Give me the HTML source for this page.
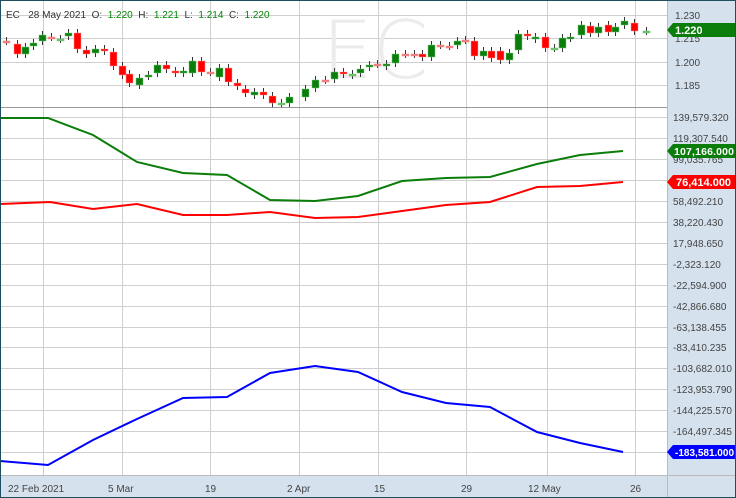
<!DOCTYPE html>
<html><head><style>
html,body{margin:0;padding:0;background:#fff}
#c{position:relative;width:736px;height:498px;overflow:hidden;font-family:"Liberation Sans",sans-serif}
</style></head><body><div id="c">
<svg id="s" width="736" height="498" xmlns="http://www.w3.org/2000/svg" style="position:absolute;left:0;top:0">
<rect x="667" y="0" width="69" height="498" fill="#d6e1ee"/>
<rect x="0" y="476" width="736" height="22" fill="#d6e1ee"/>
<g id="grid" stroke="#cfcfcf" stroke-width="1"></g>
<line x1="0" y1="107.5" x2="667" y2="107.5" stroke="#999"/>
<line x1="0" y1="475.5" x2="736" y2="475.5" stroke="#bbb"/>
<line x1="667.5" y1="0" x2="667.5" y2="498" stroke="#bbb"/>
<text x="322" y="78" font-size="80" fill="#ececec" font-family="DejaVu Sans" style="font-weight:200">EC</text>
<g id="cand"></g>
<polyline fill="none" stroke="#0a7d0a" stroke-width="2" points="0,118 48,118 93,135 137,162 183,173 227,175 270,200 315,201 358,196 402,181 446,178 490,177 537,164 580,155 623,151"/>
<polyline fill="none" stroke="#f00" stroke-width="2" points="0,204 50,202 93,209 137,204 183,215 227,215 270,212 315,218 358,217 402,211 446,205 490,202 537,187 580,186 623,182"/>
<polyline fill="none" stroke="#00f" stroke-width="2" points="0,461 48,465 93,440 137,419 183,398 227,397 270,373 315,366 358,372 402,392 446,403 490,407 537,432 580,443 623,452"/>
<g font-size="10" fill="#444" id="lab"></g>
<text x="6" y="18" font-size="10" fill="#333" xml:space="preserve">EC   28 May 2021  O:  <tspan fill="#080">1.220</tspan>  H:  <tspan fill="#080">1.221</tspan>  L:  <tspan fill="#080">1.214</tspan>  C:  <tspan fill="#080">1.220</tspan></text>
<polygon points="667,30 673,23 736,23 736,37 673,37" fill="#0a7d0a"/>
<text x="675" y="34" font-size="11" font-weight="bold" fill="#fff">1.220</text>
<polygon points="667,151 673,144 736,144 736,158 673,158" fill="#0a7d0a"/>
<text x="674" y="155" font-size="10.5" font-weight="bold" fill="#fff" textLength="60">107,166.000</text>
<polygon points="667,182 673,175 736,175 736,189 673,189" fill="#f00"/>
<text x="676" y="186" font-size="11" font-weight="bold" fill="#fff">76,414.000</text>
<polygon points="667,452 673,445 736,445 736,459 673,459" fill="#00f"/>
<text x="675" y="456" font-size="10" font-weight="bold" fill="#fff" textLength="59">-183,581.000</text>
<rect x="0.5" y="0.5" width="735" height="497" fill="none" stroke="#1d4f5f"/>
</svg>
<script>
var ns="http://www.w3.org/2000/svg";
function el(p,t,a){var e=document.createElementNS(ns,t);for(var k in a)e.setAttribute(k,a[k]);p.appendChild(e);return e;}
var g=document.getElementById('grid'),lab=document.getElementById('lab');
[43,122,210,299,378,466,547,635].forEach(function(x){el(g,'line',{x1:x+.5,y1:0,x2:x+.5,y2:476});});
[[15,'1.230'],[38,'1.215'],[62,'1.200'],[85,'1.185']].forEach(function(a){el(g,'line',{x1:0,y1:a[0]+.5,x2:667,y2:a[0]+.5});var t=el(lab,'text',{x:675,y:a[0]+4});t.textContent=a[1];});
var L=['139,579.320','119,307.540','99,035.765','78,764.000','58,492.210','38,220.430','17,948.650','-2,323.120','-22,594.900','-42,866.680','-63,138.455','-83,410.235','-103,682.010','-123,953.790','-144,225.570','-164,497.345','-183,581.000'];
L.forEach(function(s,i){var y=Math.round(117+i*20.95);el(g,'line',{x1:0,y1:y+.5,x2:667,y2:y+.5});if(i==3||i==16)return;var t=el(lab,'text',{x:673,y:y+4});t.textContent=s;});
[[8,'22 Feb 2021'],[108,'5 Mar'],[205,'19'],[287,'2 Apr'],[374,'15'],[461,'29'],[528,'12 May'],[630,'26']].forEach(function(a){var t=el(lab,'text',{x:a[0],y:492});t.textContent=a[1];});
var C=[[6,'p',41,41],[17,'r',44,54],[25,'g',47,54],[33,'g',43,46],[42,'g',35,41],[51,'p',37,37],[60,'q',39,39],[68,'g',33,36],[77,'r',33,49],[86,'r',50,54],[95,'g',49,53],[104,'r',49,51],[113,'r',52,66],[122,'r',66,75],[129,'r',74,83],[139,'g',78,85],[148,'g',75,76],[157,'g',65,73],[166,'r',65,69],[175,'r',71,73],[183,'g',71,73],[192,'g',61,73],[201,'r',61,72],[210,'p',72,72],[219,'g',68,77],[228,'r',68,82],[237,'r',83,86],[245,'r',89,93],[254,'g',92,95],[263,'r',92,95],[272,'r',96,103],[281,'q',103,103],[289,'g',97,103],[305,'g',89,97],[315,'g',80,88],[325,'p',80,80],[334,'g',72,79],[343,'r',72,74],[352,'q',74,75],[360,'g',69,73],[369,'g',65,67],[377,'p',64,64],[386,'g',64,66],[395,'g',54,63],[405,'p',54,54],[414,'p',54,54],[422,'r',54,57],[431,'g',45,57],[440,'p',45,45],[449,'p',46,46],[457,'g',41,45],[465,'p',40,40],[474,'r',41,56],[483,'g',51,56],[491,'r',51,58],[500,'r',51,60],[509,'g',53,60],[518,'g',34,50],[527,'r',34,36],[535,'g',37,39],[545,'r',37,48],[554,'q',48,48],[562,'g',38,48],[570,'g',37,38],[581,'g',25,35],[590,'r',26,33],[598,'g',27,33],[608,'r',25,32],[615,'g',27,32],[624,'g',21,25],[634,'r',23,31],[646,'q',31,31]];
var cg=document.getElementById('cand');
C.forEach(function(c){var x=c[0],t=Math.min(c[2],c[3]),b=Math.max(c[2],c[3]);
el(cg,'line',{x1:x+.5,y1:t-4,x2:x+.5,y2:b+4,stroke:'#333','stroke-width':1});
var col={r:'#f00',g:'#0a7d0a',p:'#f08080',q:'#6fbf6f'}[c[1]];
el(cg,'rect',{x:x-3,y:t,width:7,height:Math.max(b-t,2),fill:col,stroke:(c[1]=='r'?'#f99':c[1]=='g'?'#7c7':col),'stroke-width':0.5});});
</script>
</div></body></html>
